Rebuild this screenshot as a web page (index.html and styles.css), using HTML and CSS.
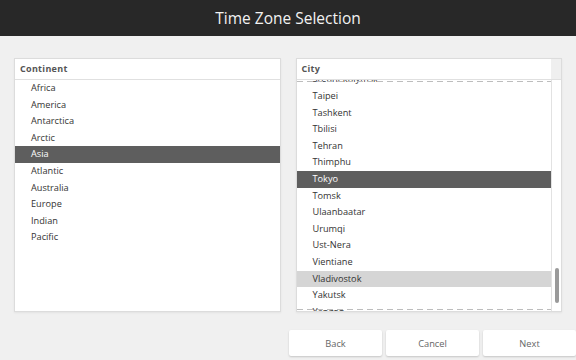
FILE: index.html
```html
<!DOCTYPE html>
<html lang="en">
<head>
    <meta charset="UTF-8">
    <meta name="viewport" content="width=device-width, initial-scale=1.0">
    <title>Time Zone Selection</title>
    <link rel="stylesheet" href="styles.css">
</head>
<body>

<div class="topbar">
    <h1>Time Zone Selection</h1>
</div>

<div class="panes">
    <div class="pane">
        <div class="pane-head">
            <span class="pane-title">Continent</span>
        </div>
        <div class="pane-body">
            <ul class="rows">
                <li>Africa</li>
                <li>America</li>
                <li>Antarctica</li>
                <li>Arctic</li>
                <li class="selected">Asia</li>
                <li>Atlantic</li>
                <li>Australia</li>
                <li>Europe</li>
                <li>Indian</li>
                <li>Pacific</li>
            </ul>
        </div>
    </div>

    <div class="pane">
        <div class="pane-head">
            <span class="pane-title">City</span>
            <span class="corner"></span>
        </div>
        <div class="pane-body">
            <div class="viewport">
                <ul class="rows scrolled">
                    <li>Srednekolymsk</li>
                    <li>Taipei</li>
                    <li>Tashkent</li>
                    <li>Tbilisi</li>
                    <li>Tehran</li>
                    <li>Thimphu</li>
                    <li class="selected">Tokyo</li>
                    <li>Tomsk</li>
                    <li>Ulaanbaatar</li>
                    <li>Urumqi</li>
                    <li>Ust-Nera</li>
                    <li>Vientiane</li>
                    <li class="hover">Vladivostok</li>
                    <li>Yakutsk</li>
                    <li>Yangon</li>
                    <li>Yekaterinburg</li>
                </ul>
            </div>
            <div class="scrollbar">
                <div class="thumb"></div>
            </div>
        </div>
    </div>
</div>

<div class="actions">
    <button type="button">Back</button>
    <button type="button">Cancel</button>
    <button type="button">Next</button>
</div>

</body>
</html>
```

FILE: styles.css
```css
body {
    margin: 0;
    width: 576px;
    height: 360px;
    background-color: #f0f0f0;
    font-family: "Open Sans", "Noto Sans", sans-serif;
    color: #333333;
    overflow: hidden;
}

.topbar {
    height: 36px;
    background-color: #282828;
    display: flex;
    justify-content: center;
    align-items: center;
}

.topbar h1 {
    margin: 0;
    font-size: 15.5px;
    font-weight: normal;
    color: #f2f2f2;
}

.panes {
    display: flex;
    gap: 15px;
    padding: 22px 14px 0 14px;
    height: 254px;
}

.pane {
    flex: 1;
    display: flex;
    flex-direction: column;
    background-color: #ffffff;
    border: 1px solid #dcdcdc;
    box-shadow: 0 1px 2px rgba(0, 0, 0, 0.06);
}

.pane-head {
    display: flex;
    height: 20px;
    border-bottom: 1px solid #e0e0e0;
}

.pane-title {
    flex: 1;
    padding-left: 5px;
    line-height: 20px;
    font-size: 9px;
    font-weight: bold;
    letter-spacing: 0.3px;
    color: #555555;
}

.corner {
    width: 10px;
    background-color: #efefef;
}

.pane-body {
    flex: 1;
    display: flex;
    min-height: 0;
}

.rows {
    list-style: none;
    margin: 0;
    padding: 0;
    flex: 1;
}

.rows li {
    height: 16.6px;
    line-height: 16.6px;
    padding-left: 16px;
    font-size: 9.2px;
    color: #333333;
    white-space: nowrap;
}

.rows li.selected {
    background-color: #5e5e5e;
    color: #ffffff;
}

.rows li.hover {
    background-color: #d5d5d5;
}

.viewport {
    flex: 1;
    overflow: hidden;
    position: relative;
}

.rows.scrolled {
    margin-top: -8.6px;
}

/* dashed edges over the scrolled list */
.viewport::before,
.viewport::after {
    content: "";
    position: absolute;
    left: 0;
    right: 0;
    height: 1px;
    background: repeating-linear-gradient(to right, #bdbdbd 0 6px, transparent 6px 10px);
}

.viewport::before {
    top: 1px;
}

.viewport::after {
    bottom: 1px;
}

.scrollbar {
    width: 9px;
    border-left: 1px solid #e2e2e2;
}

.thumb {
    width: 4px;
    height: 35px;
    margin: 188px auto 0 auto;
    background-color: #9a9a9a;
    border-radius: 2px;
}

.actions {
    display: flex;
    justify-content: flex-end;
    gap: 4px;
    padding-top: 18px;
}

.actions button {
    width: 93px;
    height: 26px;
    border: none;
    border-radius: 2px;
    background-color: #ffffff;
    box-shadow: 0 1px 2px rgba(0, 0, 0, 0.18);
    font-family: "Open Sans", "Noto Sans", sans-serif;
    font-size: 9.3px;
    color: #666666;
    padding: 0;
}
```
